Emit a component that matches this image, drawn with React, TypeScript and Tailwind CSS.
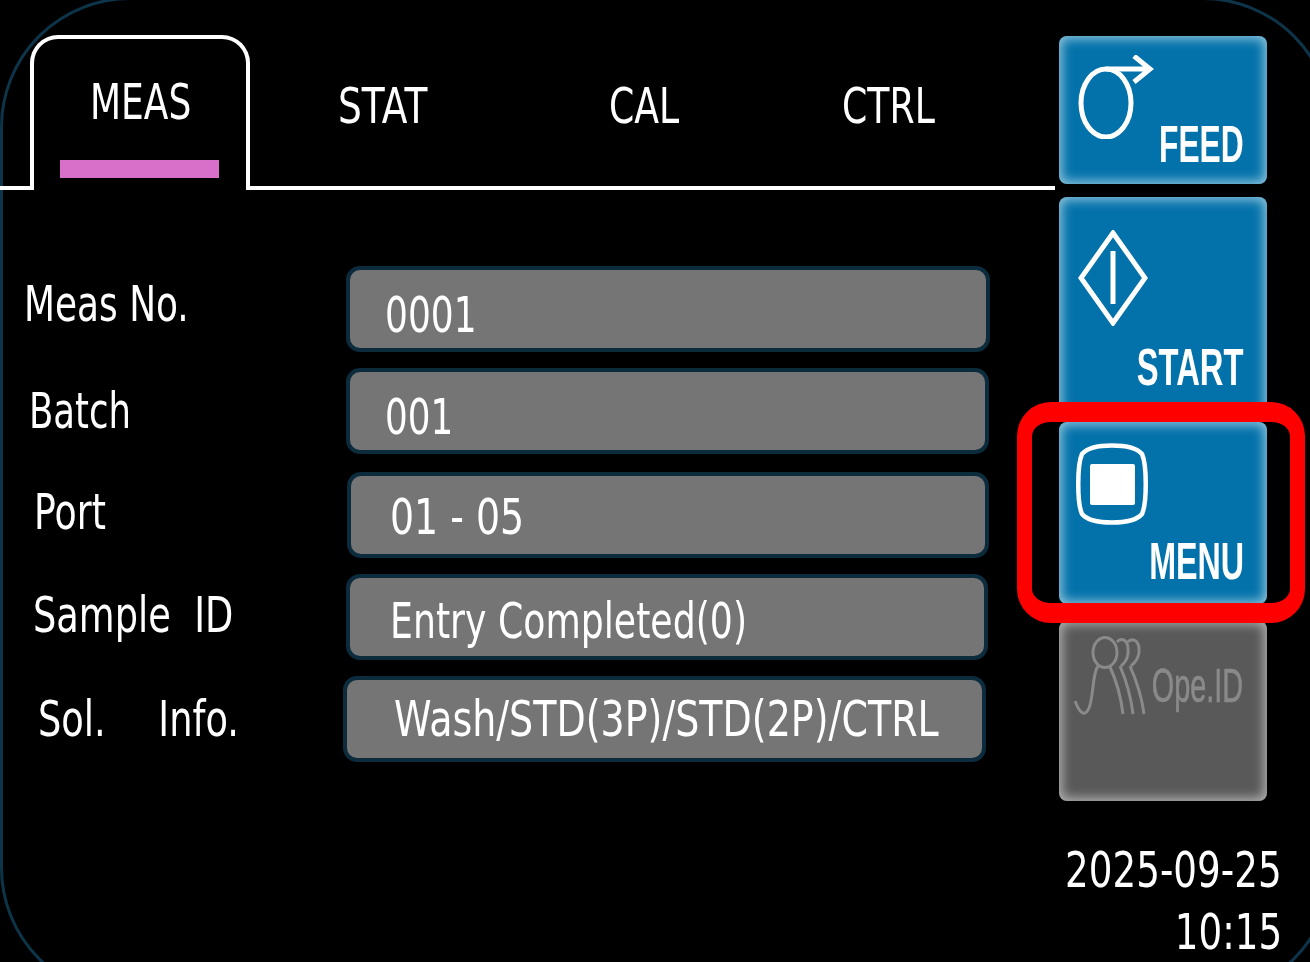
import React from "react";

const ui = "font-['DejaVu_Sans',sans-serif] text-white inline-block origin-left text-[50px] leading-none whitespace-pre";
const s = "scale-x-[0.725]";
const btn = "font-['Liberation_Sans',sans-serif] whitespace-nowrap inline-block origin-right leading-none blur-[0.4px]";
const btnBlue = btn + " font-bold text-white text-[52px]";
const blue = "bg-[#0472aa] rounded-[8px] shadow-[inset_0_0_11px_3px_rgba(200,230,240,0.7)] flex flex-col w-[208px]";

function Row({ cls, label, labelCls, labelScale, value, fieldCls, valueScale }: { cls: string; label: string; labelCls: string; labelScale: string; value: string; fieldCls: string; valueScale: string }) {
  return (
    <div className={"flex items-center h-[86px] " + cls}>
      <div className={labelCls}><span className={ui + " " + labelScale}>{label}</span></div>
      <div className={"h-full box-border border-4 border-[#0c2c3e] rounded-[14px] bg-[#757575] flex items-center " + fieldCls}>
        <span className={ui + " " + valueScale}>{value}</span>
      </div>
    </div>
  );
}

export default function App() {
  return (
    <div className="relative w-[1310px] h-[962px] overflow-hidden bg-black flex items-start">
      <div className="absolute left-0 top-[-3px] w-[1333px] h-[1001px] rounded-[130px] border-[3px] border-[#0d3448]" />
      <div className="relative w-[1055px] shrink-0">
        <div className="h-[190px] box-border border-b-[4px] border-white flex items-start pl-[30px]">
          <div className="mt-[35px] w-[220px] h-[155px] box-border border-x-[4px] border-t-[4px] border-white rounded-t-[28px] bg-black flex flex-col items-start pl-[56px]">
            <span className={ui + " scale-x-[0.72] mt-[38px]"}>MEAS</span>
            <div className="mt-[33px] -ml-[30px] w-[159px] h-[18px] bg-[#d86fc9]" />
          </div>
          <span className={ui + " scale-x-[0.75] mt-[81px] ml-[88px] w-[170px]"}>STAT</span>
          <span className={ui + " " + s + " mt-[81px] ml-[101px] w-[130px]"}>CAL</span>
          <span className={ui + " " + s + " mt-[81px] ml-[103px]"}>CTRL</span>
        </div>
        <div className="pt-[76px] flex flex-col">
          <Row cls="" label="Meas No." labelCls="w-[346px] pl-[24px] pb-[10px]" labelScale="scale-x-[0.718]" value="0001" fieldCls="w-[644px] pl-[35px] pt-[12px]" valueScale="scale-x-[0.72]" />
          <Row cls="mt-[16px]" label="Batch" labelCls="w-[346px] pl-[29px]" labelScale="scale-x-[0.71]" value="001" fieldCls="w-[643px] pl-[35px] pt-[12px]" valueScale="scale-x-[0.715]" />
          <Row cls="mt-[18px]" label="Port" labelCls="w-[347px] pl-[34px] pb-[6px]" labelScale={s} value="01 - 05" fieldCls="w-[642px] pl-[39px] pt-[4px]" valueScale="scale-x-[0.757]" />
          <Row cls="mt-[16px]" label="Sample  ID" labelCls="w-[346px] pl-[33px] pb-[4px]" labelScale="scale-x-[0.735]" value="Entry Completed(0)" fieldCls="w-[642px] pl-[40px] pt-[8px]" valueScale={s} />
          <Row cls="mt-[16px]" label="Sol.    Info." labelCls="w-[343px] pl-[38px]" labelScale="scale-x-[0.735] [word-spacing:2px]" value="Wash/STD(3P)/STD(2P)/CTRL" fieldCls="w-[643px] pl-[47px]" valueScale="scale-x-[0.76]" />
        </div>
      </div>
      <div className="relative ml-[4px] pt-[36px] w-[208px] flex flex-col">
        <div className={blue + " h-[148px] pt-[19px]"}>
          <svg className="ml-[18px] shrink-0 blur-[0.3px]" width="80" height="84" viewBox="0 0 80 84" fill="none" stroke="white" strokeWidth="5">
            <ellipse cx="29" cy="48" rx="25" ry="34" />
            <path d="M29 14 H73 M57 1 L73 14 L57 27" />
          </svg>
          <div className="-mt-[21px] flex justify-end pr-[23px]"><span className={btnBlue + " scale-x-[0.61]"}>FEED</span></div>
        </div>
        <div className={blue + " mt-[13px] h-[218px] pt-[33px]"}>
          <svg className="ml-[19px] shrink-0 blur-[0.3px]" width="70" height="96" viewBox="0 0 70 96" fill="none" stroke="white" strokeWidth="5">
            <path d="M35 3 L67 48 L35 93 L3 48 Z M35 21 V74" />
          </svg>
          <div className="mt-[15px] flex justify-end pr-[24px]"><span className={btnBlue + " scale-x-[0.63]"}>START</span></div>
        </div>
        <div className="relative mt-[7px]">
          <div className={blue + " h-[182px] pt-[21px]"}>
            <svg className="ml-[16px] shrink-0 blur-[0.3px]" width="74" height="82" viewBox="0 0 74 82" fill="none">
              <path d="M37 2.5 C52 2.5 62 5 67 11 C72 22 72 60 67 71 C62 77 52 79.5 37 79.5 C22 79.5 12 77 7 71 C2 60 2 22 7 11 C12 5 22 2.5 37 2.5 Z" stroke="white" strokeWidth="4.5" />
              <rect x="15" y="21" width="45" height="41" rx="2" fill="white" />
            </svg>
            <div className="mt-[10px] flex justify-end pr-[23px]"><span className={btnBlue + " scale-x-[0.62]"}>MENU</span></div>
          </div>
          <div className="absolute left-[-42px] right-[-38px] top-[-20px] bottom-[-19px] rounded-[34px] border-x-[15px] border-y-[20px] border-[#ff0000]" />
        </div>
        <div className="mt-[17px] h-[180px] rounded-[8px] bg-[#595959] shadow-[inset_0_0_11px_3px_rgba(225,225,225,0.65)] flex items-start pt-[15px] pl-[15px]">
          <svg className="shrink-0 blur-[0.4px]" width="72" height="84" viewBox="0 0 72 84" fill="none" stroke="#8a8a8a" strokeWidth="3">
            <ellipse cx="31" cy="16.5" rx="12" ry="15" />
            <path d="M43 6 C46 2 53 2 54 12 C55 20 52 26 47 30 M54 6 C57 2 64 3 65 12 C66 20 62 26 57 30" />
            <path d="M24 30 C18 38 20 60 15 72 C11 81 6 78 1 65" />
            <path d="M36 31 C43 46 47 62 49 78 M46 30 C53 46 57 62 59 78 M56 30 C63 46 68 62 70 78" />
          </svg>
          <div className="ml-[1px] mt-[26px] w-[96px] flex justify-end">
            <span className={btn + " font-normal text-[#8a8a8a] scale-x-[0.6] text-[48px] [-webkit-text-stroke:0.7px_#8a8a8a]"}>Ope.ID</span>
          </div>
        </div>
        <div className="mt-[44px] -mr-[15px] flex flex-col items-end gap-[12px]">
          <span className={ui + " !origin-right scale-x-[0.745]"}>2025-09-25</span>
          <span className={ui + " !origin-right scale-x-[0.745]"}>10:15</span>
        </div>
      </div>
    </div>
  );
}
